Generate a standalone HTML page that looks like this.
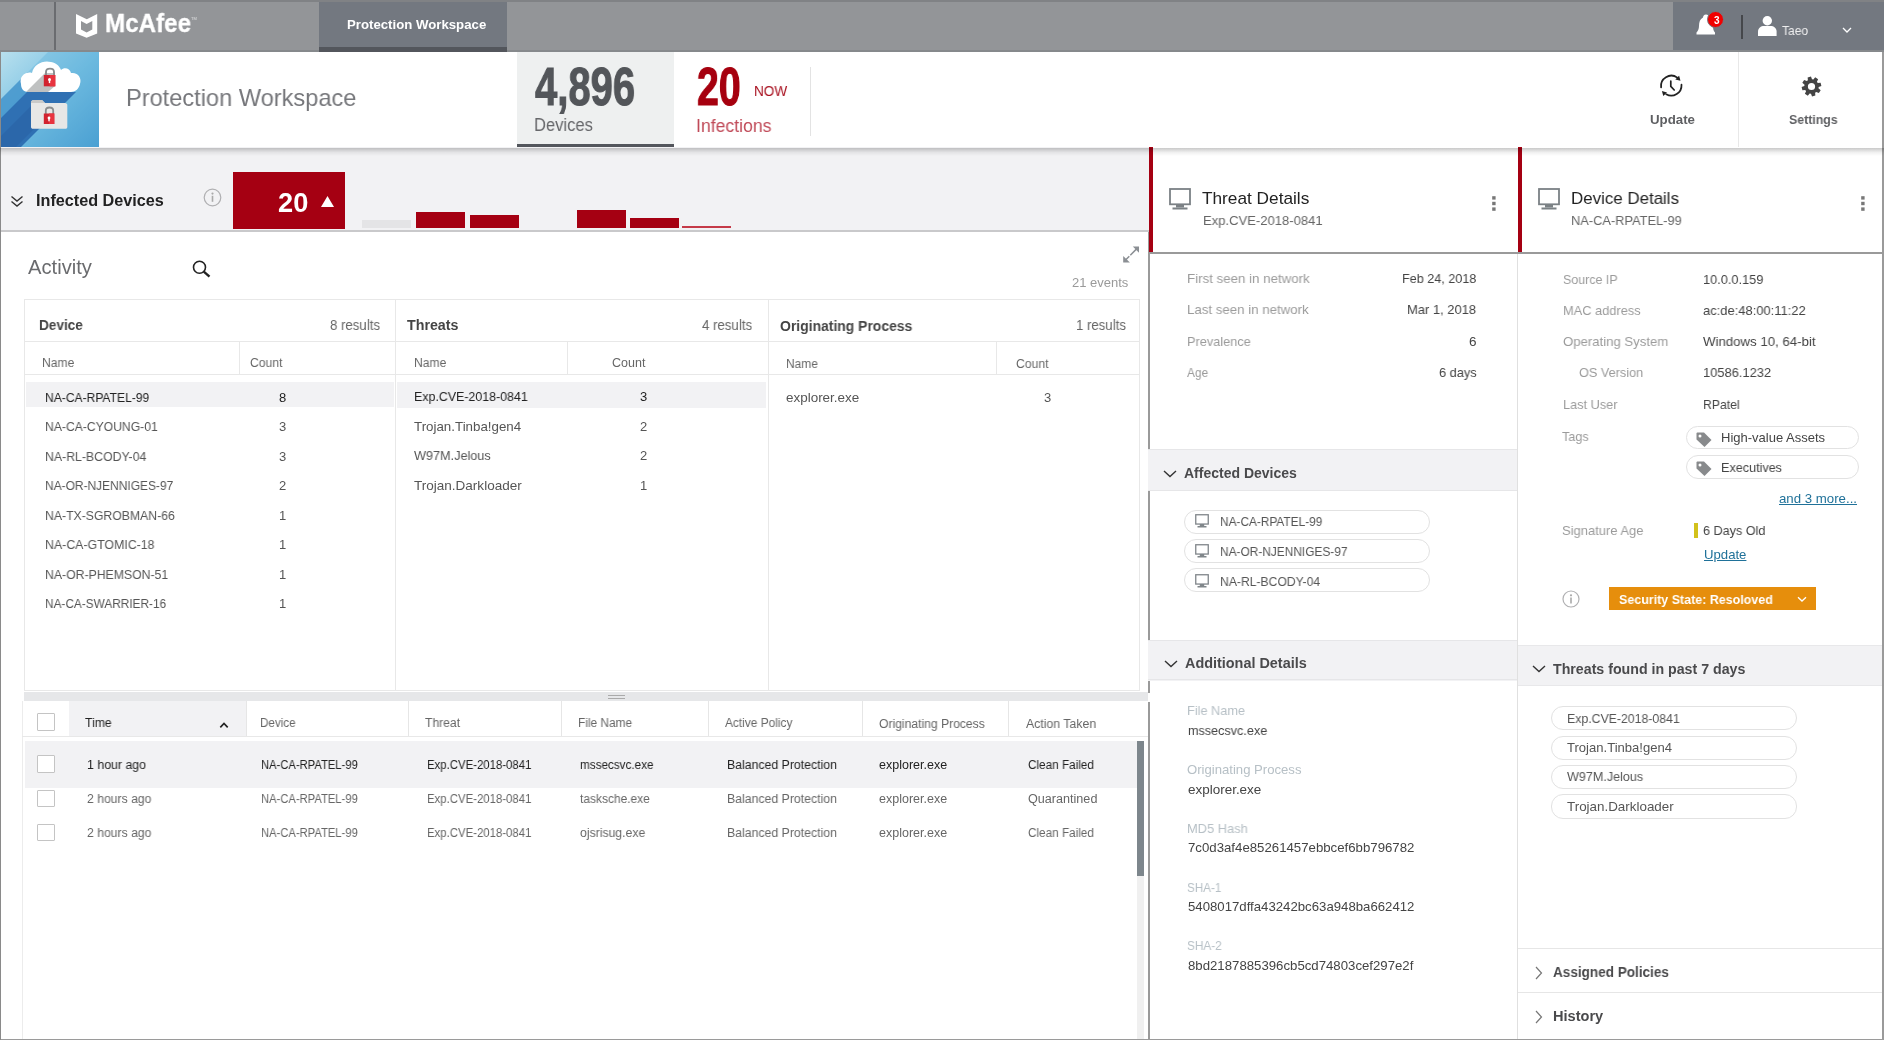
<!DOCTYPE html>
<html><head><meta charset="utf-8"><style>
html,body{margin:0;padding:0;}
body{width:1884px;height:1040px;position:relative;overflow:hidden;background:#fff;font-family:"Liberation Sans",sans-serif;}
.t{position:absolute;white-space:nowrap;line-height:1;transform-origin:0 0;will-change:transform;}
.r{position:absolute;}
svg.r{display:block;overflow:visible;}
</style></head><body>
<div class="r" style="left:0px;top:0px;width:1884px;height:52px;background:#939598;"></div>
<div class="r" style="left:0px;top:0px;width:1884px;height:1.6px;background:#808285;"></div>
<div class="r" style="left:54.3px;top:1.6px;width:1.3px;height:50.4px;background:#6a6c70;"></div>
<svg class="r" style="left:76px;top:13.5px" width="22" height="24" viewBox="0 0 22 24"><path fill="#fff" fill-rule="evenodd" d="M0 0 L10.8 5.2 L21.2 0 L21.2 19.4 L10.6 23.7 L0 19.4 Z M5 7 L5 15.6 L10.6 18.6 L16.3 15.6 L16.3 7 L10.6 10 Z"/></svg>
<div class="t" style="left:104.60px;top:9.94px;font-size:26.3px;color:#fff;font-weight:bold;transform:scaleX(0.9193);-webkit-text-stroke:0.3px #fff;">McAfee</div>
<div class="t" style="left:191.20px;top:17.41px;font-size:4px;color:#fff;opacity:0.7;">TM</div>
<div class="r" style="left:319.3px;top:1.6px;width:187.7px;height:50.4px;background:#737880;"></div>
<div class="r" style="left:319.3px;top:47px;width:187.7px;height:5px;background:#53565c;"></div>
<div class="t" style="left:347.30px;top:18.40px;font-size:13px;color:#fff;font-weight:bold;transform:scaleX(1.0161);">Protection Workspace</div>
<div class="r" style="left:1672.8px;top:1.6px;width:1211.2px;height:50.4px;background:#737880;"></div>
<div class="r" style="left:507px;top:50px;width:1377px;height:2px;background:#86898c;"></div>
<div class="r" style="left:0px;top:50px;width:319.3px;height:2px;background:#86898c;"></div>
<svg class="r" style="left:1696px;top:13px" width="20" height="23" viewBox="0 0 20 23"><path fill="#fff" d="M10 1.5 C8 1.5 7 3 7 4.5 C4 6 3 9 3 13 C3 16 2 18 0.5 19.5 L0.5 21.5 L19 21.5 L19 19.5 C17.5 18 17 16 17 13 C17 9 16 6 13 4.5 C13 3 12 1.5 10 1.5 Z"/></svg>
<div class="r" style="left:1707.3px;top:10.9px;width:15px;height:15px;border-radius:50%;background:#f00000;border:1.7px solid #737880"></div>
<div class="t" style="left:1713.90px;top:15.64px;font-size:10px;color:#fff;font-weight:bold;transform:scaleX(0.9550);">3</div>
<div class="r" style="left:1741px;top:15px;width:1.5px;height:24px;background:#45474b;"></div>
<svg class="r" style="left:1758px;top:16px" width="19" height="20" viewBox="0 0 19 20"><circle cx="9.3" cy="4.7" r="4.7" fill="#fff"/><path fill="#fff" d="M0 20 L0 15.5 C0 12 3 10 6 10 L12.6 10 C15.6 10 18.6 12 18.6 15.5 L18.6 20 Z"/></svg>
<div class="t" style="left:1781.90px;top:24.00px;font-size:13px;color:#eeeeee;transform:scaleX(0.9255);">Taeo</div>
<svg class="r" style="left:1842px;top:27px" width="10" height="7" viewBox="0 0 10 7"><path d="M1 1 L5 5 L9 1" stroke="#fff" stroke-width="1.3" fill="none"/></svg>
<div class="r" style="left:0px;top:52px;width:1884px;height:95px;background:#fff;"></div>
<svg class="r" style="left:1px;top:52px" width="98" height="95" viewBox="0 0 98 95">
<defs><linearGradient id="bg1" x1="0" y1="0" x2="1" y2="1"><stop offset="0" stop-color="#b8e0ee"/><stop offset="0.5" stop-color="#78c0e2"/><stop offset="1" stop-color="#4398cf"/></linearGradient></defs>
<rect width="98" height="95" fill="url(#bg1)"/>
<path d="M0 47 L47 0 L98 0 L98 95 L0 95 Z" fill="#58aedb" opacity="0.35"/>
<path d="M0 47 L27 20 L40 40 L0 80 Z" fill="#3f90ca" opacity="0.75"/>
<path d="M0 66 L26 40 L75 40 L20 95 L0 95 Z" fill="#2f70b3"/>
<path d="M0 95 L0 84 L30 54 L56 54 L15 95 Z" fill="#2b65a8" opacity="0.8"/>
<path d="M20 32 C18 25 24 19 31 21 C33 12 42 8 50 10 C56 11 59 15 60 18 C63 15 69 16 70 21 C77 20 81 26 79 32 C78 37 74 40 70 40 L27 40 C22 40 20 36 20 32 Z" fill="#fff"/>
<path d="M25 40 L44 21 L54 21 L54 34 L47 40 Z" fill="#bfc1c1"/>
<path d="M45 24 L45 20 C45 15.5 53 15.5 53 20 L53 24" stroke="#8a8d8e" stroke-width="1.9" fill="none"/>
<rect x="42.8" y="23" width="11.5" height="11.3" fill="#d2232f"/>
<rect x="48.6" y="23" width="5.7" height="11.3" fill="#e8343f"/>
<circle cx="48.5" cy="27.6" r="1.5" fill="#fff"/><rect x="47.8" y="27.6" width="1.4" height="3.5" fill="#fff"/>
<path d="M30 51 C30 49 31 48 33 48 L41 48 L44 51 L64 51 C65.5 51 66.3 52 66.3 53 L66.3 75 C66.3 76 65.5 76.8 64.5 76.8 L32 76.8 C30.8 76.8 30 76 30 75 Z" fill="#e7e7e6"/>
<path d="M30 51 C30 49 31 48 33 48 L41 48 L44 51 Z" fill="#c9c9c8"/>
<path d="M44.8 62 L44.8 58.5 C44.8 54.5 52.2 54.5 52.2 58.5 L52.2 62" stroke="#8a8d8e" stroke-width="1.8" fill="none"/>
<rect x="42.8" y="61.5" width="10.5" height="10.5" fill="#d2232f"/>
<rect x="48" y="61.5" width="5.3" height="10.5" fill="#e8343f"/>
<circle cx="48" cy="66" r="1.4" fill="#fff"/><rect x="47.3" y="66" width="1.4" height="3.3" fill="#fff"/>
</svg>
<div class="t" style="left:126.00px;top:85.99px;font-size:24px;color:#76777b;transform:scaleX(0.9831);">Protection Workspace</div>
<div class="r" style="left:516.6px;top:52px;width:157px;height:95px;background:#eef0f0;"></div>
<div class="r" style="left:516.6px;top:143.8px;width:157.4px;height:4.2px;background:#53565c;"></div>
<div class="t" style="left:534.60px;top:59.87px;font-size:54.5px;color:#53565a;font-weight:bold;transform:scaleX(0.7346);-webkit-text-stroke:1.1px #53565a;">4,896</div>
<div class="t" style="left:533.80px;top:115.66px;font-size:18px;color:#66676a;transform:scaleX(0.9203);">Devices</div>
<div class="t" style="left:696.80px;top:59.87px;font-size:54.5px;color:#a6000f;font-weight:bold;transform:scaleX(0.7211);-webkit-text-stroke:1.1px #a6000f;">20</div>
<div class="t" style="left:753.70px;top:84.35px;font-size:14px;color:#a8101f;transform:scaleX(0.9708);">NOW</div>
<div class="t" style="left:695.50px;top:116.86px;font-size:18px;color:#c04a58;transform:scaleX(0.9799);">Infections</div>
<div class="r" style="left:809.5px;top:67px;width:1px;height:69px;background:#e3e3e3;"></div>
<svg class="r" style="left:1659px;top:73.5px" width="25" height="24" viewBox="0 0 25 24"><path d="M2.1 13.4 A10.3 10.3 0 0 1 18.3 3.6" stroke="#222" stroke-width="1.75" fill="none" stroke-linecap="round"/><path d="M22.5 10.7 A10.3 10.3 0 0 1 7.2 20.3" stroke="#222" stroke-width="1.75" fill="none" stroke-linecap="round"/><path d="M21.5 6.7 L16.3 5.6 L20.1 1.8 Z" fill="#222"/><path d="M2.9 16.9 L8 18.4 L4.3 22.1 Z" fill="#222"/><path d="M11.8 7.2 L11.8 12.4 L15.2 16" stroke="#222" stroke-width="1.7" fill="none" stroke-linecap="round"/></svg>
<div class="t" style="left:1650.00px;top:112.60px;font-size:13px;color:#5e5f62;font-weight:bold;transform:scaleX(1.0216);">Update</div>
<div class="r" style="left:1738px;top:52px;width:1px;height:95px;background:#e8e8e8;"></div>
<svg class="r" style="left:1798.9px;top:73.8px" width="25" height="25" viewBox="0 0 25 25"><path fill="#444" fill-rule="evenodd" d="M8.90 6.26 L8.63 3.39 L11.98 2.61 L13.00 5.32 L14.36 5.55 L16.21 3.32 L19.12 5.14 L17.93 7.78 L18.74 8.90 L21.61 8.63 L22.39 11.98 L19.68 13.00 L19.45 14.36 L21.68 16.21 L19.86 19.12 L17.22 17.93 L16.10 18.74 L16.37 21.61 L13.02 22.39 L12.00 19.68 L10.64 19.45 L8.79 21.68 L5.88 19.86 L7.07 17.22 L6.26 16.10 L3.39 16.37 L2.61 13.02 L5.32 12.00 L5.55 10.64 L3.32 8.79 L5.14 5.88 L7.78 7.07 Z M16.1 12.5 A3.6 3.6 0 1 0 8.9 12.5 A3.6 3.6 0 1 0 16.1 12.5 Z"/></svg>
<div class="t" style="left:1788.90px;top:112.60px;font-size:13px;color:#5e5f62;font-weight:bold;transform:scaleX(0.9493);">Settings</div>
<div class="r" style="left:0px;top:147px;width:1150px;height:84px;background:#f2f2f4;"></div>
<div class="r" style="left:0px;top:230px;width:1150px;height:1.6px;background:#c9c9cb;"></div>
<svg class="r" style="left:10px;top:194.5px" width="14" height="13" viewBox="0 0 14 13"><path d="M1.5 1.5 L7 6 L12.5 1.5 M1.5 6.5 L7 11 L12.5 6.5" stroke="#333" stroke-width="1.4" fill="none"/></svg>
<div class="t" style="left:35.90px;top:192.66px;font-size:16px;color:#222;font-weight:bold;transform:scaleX(1.0127);">Infected Devices</div>
<svg class="r" style="left:202.5px;top:188px" width="19" height="19" viewBox="0 0 19 19"><circle cx="9.5" cy="9.5" r="8.3" stroke="#b0b0b2" stroke-width="1.2" fill="none"/><circle cx="9.5" cy="5.6" r="1.1" fill="#aaa"/><rect x="8.7" y="7.8" width="1.6" height="6" fill="#aaa"/></svg>
<div class="r" style="left:233px;top:172px;width:112px;height:56.6px;background:#a50012;"></div>
<div class="t" style="left:277.70px;top:189.95px;font-size:27px;color:#fff;font-weight:bold;transform:scaleX(1.0083);">20</div>
<svg class="r" style="left:321px;top:196px" width="13" height="11" viewBox="0 0 13 11"><path d="M6.5 0 L13 11 L0 11 Z" fill="#fff"/></svg>
<div class="r" style="left:362px;top:219.6px;width:49px;height:8px;background:#e4e4e6;"></div>
<div class="r" style="left:416px;top:211.8px;width:49px;height:15.8px;background:#a50012;"></div>
<div class="r" style="left:470px;top:215.2px;width:49px;height:12.4px;background:#a50012;"></div>
<div class="r" style="left:577px;top:210px;width:49px;height:17.6px;background:#a50012;"></div>
<div class="r" style="left:630px;top:217.6px;width:49px;height:10px;background:#a50012;"></div>
<div class="r" style="left:682px;top:225.8px;width:49px;height:1.8px;background:#c53a48;"></div>
<div class="r" style="left:0px;top:231.6px;width:1148px;height:810px;background:#fff;"></div>
<div class="t" style="left:27.90px;top:257.27px;font-size:20px;color:#6a6b6e;transform:scaleX(1.0087);">Activity</div>
<svg class="r" style="left:192px;top:260px" width="20" height="18" viewBox="0 0 20 18"><circle cx="7.5" cy="7.3" r="6" stroke="#222" stroke-width="1.6" fill="none"/><path d="M11.8 11.6 L17.5 16.6" stroke="#222" stroke-width="2.4"/></svg>
<svg class="r" style="left:1122px;top:244.5px" width="18" height="19" viewBox="0 0 18 19"><path d="M3.3 15.2 L7.3 11.2 M8.3 10.2 L14.6 3.9" stroke="#8b8f94" stroke-width="1.5"/><path d="M10.8 1.6 L17 1.6 L17 7.8 Z" fill="#8b8f94"/><path d="M1.2 10.9 L1.2 17.4 L7.9 17.4 Z" fill="#8b8f94"/></svg>
<div class="t" style="left:1072.00px;top:276.40px;font-size:13px;color:#9a9a9a;">21 events</div>
<div class="r" style="left:24px;top:298.5px;width:1115.5px;height:392px;border:1px solid #e8e8e8;box-sizing:border-box;background:#fff"></div>
<div class="r" style="left:395px;top:299px;width:1px;height:391px;background:#e8e8e8;"></div>
<div class="r" style="left:767.5px;top:299px;width:1px;height:391px;background:#e8e8e8;"></div>
<div class="r" style="left:24px;top:341.2px;width:1115.5px;height:1px;background:#e8e8e8;"></div>
<div class="r" style="left:24px;top:373.5px;width:1115.5px;height:1px;background:#e8e8e8;"></div>
<div class="r" style="left:239.3px;top:342px;width:1px;height:31.5px;background:#e8e8e8;"></div>
<div class="r" style="left:567px;top:342px;width:1px;height:31.5px;background:#e8e8e8;"></div>
<div class="r" style="left:995.5px;top:342px;width:1px;height:31.5px;background:#e8e8e8;"></div>
<div class="t" style="left:39.00px;top:317.55px;font-size:14px;color:#444;font-weight:bold;transform:scaleX(0.9723);">Device</div>
<div class="t" style="left:330.00px;top:317.55px;font-size:14px;color:#666;transform:scaleX(0.9452);">8 results</div>
<div class="t" style="left:407.30px;top:317.75px;font-size:14px;color:#444;font-weight:bold;transform:scaleX(1.0168);">Threats</div>
<div class="t" style="left:701.70px;top:317.75px;font-size:14px;color:#666;transform:scaleX(0.9471);">4 results</div>
<div class="t" style="left:779.50px;top:318.65px;font-size:14px;color:#444;font-weight:bold;transform:scaleX(0.9944);">Originating Process</div>
<div class="t" style="left:1075.70px;top:318.45px;font-size:14px;color:#666;transform:scaleX(0.9433);">1 results</div>
<div class="t" style="left:42.40px;top:356.72px;font-size:12.5px;color:#666;transform:scaleX(0.9685);">Name</div>
<div class="t" style="left:250.30px;top:356.72px;font-size:12.5px;color:#666;transform:scaleX(0.9715);">Count</div>
<div class="t" style="left:414.00px;top:356.92px;font-size:12.5px;color:#666;transform:scaleX(0.9685);">Name</div>
<div class="t" style="left:612.30px;top:356.92px;font-size:12.5px;color:#666;transform:scaleX(0.9925);">Count</div>
<div class="t" style="left:785.50px;top:358.02px;font-size:12.5px;color:#666;transform:scaleX(0.9535);">Name</div>
<div class="t" style="left:1015.80px;top:358.02px;font-size:12.5px;color:#666;transform:scaleX(0.9745);">Count</div>
<div class="r" style="left:25.6px;top:381.8px;width:368.3px;height:25.6px;background:#f2f2f4;"></div>
<div class="r" style="left:397.4px;top:382px;width:368.5px;height:26px;background:#f2f2f4;"></div>
<div class="t" style="left:44.50px;top:390.90px;font-size:13px;color:#222;transform:scaleX(0.9287);">NA-CA-RPATEL-99</div>
<div class="t" style="left:279.30px;top:390.90px;font-size:13px;color:#222;transform:scaleX(0.9500);">8</div>
<div class="t" style="left:44.50px;top:420.35px;font-size:13px;color:#555;transform:scaleX(0.9345);">NA-CA-CYOUNG-01</div>
<div class="t" style="left:279.30px;top:420.35px;font-size:13px;color:#555;transform:scaleX(0.9500);">3</div>
<div class="t" style="left:44.50px;top:449.80px;font-size:13px;color:#555;transform:scaleX(0.9454);">NA-RL-BCODY-04</div>
<div class="t" style="left:279.30px;top:449.80px;font-size:13px;color:#555;transform:scaleX(0.9500);">3</div>
<div class="t" style="left:44.50px;top:479.25px;font-size:13px;color:#555;transform:scaleX(0.9197);">NA-OR-NJENNIGES-97</div>
<div class="t" style="left:279.30px;top:479.25px;font-size:13px;color:#555;transform:scaleX(0.9500);">2</div>
<div class="t" style="left:44.50px;top:508.70px;font-size:13px;color:#555;transform:scaleX(0.9409);">NA-TX-SGROBMAN-66</div>
<div class="t" style="left:279.30px;top:508.70px;font-size:13px;color:#555;transform:scaleX(0.9500);">1</div>
<div class="t" style="left:44.50px;top:538.15px;font-size:13px;color:#555;transform:scaleX(0.9497);">NA-CA-GTOMIC-18</div>
<div class="t" style="left:279.30px;top:538.15px;font-size:13px;color:#555;transform:scaleX(0.9500);">1</div>
<div class="t" style="left:44.50px;top:567.60px;font-size:13px;color:#555;transform:scaleX(0.9423);">NA-OR-PHEMSON-51</div>
<div class="t" style="left:279.30px;top:567.60px;font-size:13px;color:#555;transform:scaleX(0.9500);">1</div>
<div class="t" style="left:44.50px;top:597.05px;font-size:13px;color:#555;transform:scaleX(0.9095);">NA-CA-SWARRIER-16</div>
<div class="t" style="left:279.30px;top:597.05px;font-size:13px;color:#555;transform:scaleX(0.9500);">1</div>
<div class="t" style="left:414.00px;top:390.20px;font-size:13px;color:#222;transform:scaleX(0.9543);">Exp.CVE-2018-0841</div>
<div class="t" style="left:640.00px;top:390.20px;font-size:13px;color:#222;transform:scaleX(0.9500);">3</div>
<div class="t" style="left:414.00px;top:419.65px;font-size:13px;color:#555;transform:scaleX(1.0253);">Trojan.Tinba!gen4</div>
<div class="t" style="left:640.00px;top:419.65px;font-size:13px;color:#555;transform:scaleX(0.9500);">2</div>
<div class="t" style="left:414.00px;top:449.10px;font-size:13px;color:#555;transform:scaleX(0.9740);">W97M.Jelous</div>
<div class="t" style="left:640.00px;top:449.10px;font-size:13px;color:#555;transform:scaleX(0.9500);">2</div>
<div class="t" style="left:414.00px;top:478.55px;font-size:13px;color:#555;transform:scaleX(1.0401);">Trojan.Darkloader</div>
<div class="t" style="left:640.00px;top:478.55px;font-size:13px;color:#555;transform:scaleX(0.9500);">1</div>
<div class="t" style="left:785.50px;top:391.10px;font-size:13px;color:#555;transform:scaleX(1.0339);">explorer.exe</div>
<div class="t" style="left:1043.90px;top:391.10px;font-size:13px;color:#555;transform:scaleX(0.9500);">3</div>
<div class="r" style="left:24px;top:692.3px;width:1124px;height:9px;background:#e6e7e9;"></div>
<div class="r" style="left:608px;top:695.2px;width:17px;height:1px;background:#aaa;"></div>
<div class="r" style="left:608px;top:698.4px;width:17px;height:1px;background:#aaa;"></div>
<div class="r" style="left:22.3px;top:701.2px;width:1px;height:340px;background:#ececec;"></div>
<div class="r" style="left:69px;top:701.2px;width:177.3px;height:35.2px;background:#f2f2f4;"></div>
<div class="r" style="left:22.3px;top:736px;width:1125.4px;height:1.3px;background:#e8e8e8;"></div>
<div class="r" style="left:246.3px;top:701.2px;width:1px;height:35px;background:#e6e6e6;"></div>
<div class="r" style="left:408px;top:701.2px;width:1px;height:35px;background:#e6e6e6;"></div>
<div class="r" style="left:560.7px;top:701.2px;width:1px;height:35px;background:#e6e6e6;"></div>
<div class="r" style="left:707.6px;top:701.2px;width:1px;height:35px;background:#e6e6e6;"></div>
<div class="r" style="left:861.6px;top:701.2px;width:1px;height:35px;background:#e6e6e6;"></div>
<div class="r" style="left:1008.4px;top:701.2px;width:1px;height:35px;background:#e6e6e6;"></div>
<div class="r" style="left:37.2px;top:713.3px;width:17.4px;height:17.4px;border:1px solid #c4c4c4;box-sizing:border-box;background:#fff;border-radius:1px"></div>
<div class="t" style="left:85.40px;top:716.92px;font-size:12.5px;color:#222;transform:scaleX(0.9780);">Time</div>
<svg class="r" style="left:218.5px;top:720.5px" width="10" height="8" viewBox="0 0 10 8"><path d="M1.3 6.3 L5 2.5 L8.7 6.3" stroke="#222" stroke-width="1.7" fill="none"/></svg>
<div class="t" style="left:259.60px;top:717.22px;font-size:12.5px;color:#666;transform:scaleX(0.9319);">Device</div>
<div class="t" style="left:425.20px;top:717.22px;font-size:12.5px;color:#666;transform:scaleX(0.9682);">Threat</div>
<div class="t" style="left:578.20px;top:717.22px;font-size:12.5px;color:#666;transform:scaleX(0.9500);">File Name</div>
<div class="t" style="left:725.00px;top:717.22px;font-size:12.5px;color:#666;transform:scaleX(0.9527);">Active Policy</div>
<div class="t" style="left:879.40px;top:718.02px;font-size:12.5px;color:#666;transform:scaleX(0.9702);">Originating Process</div>
<div class="t" style="left:1025.60px;top:718.02px;font-size:12.5px;color:#666;transform:scaleX(0.9825);">Action Taken</div>
<div class="r" style="left:24.7px;top:741px;width:1112.3px;height:47px;background:#f2f2f4;"></div>
<div class="r" style="left:37.2px;top:755.4px;width:17.4px;height:17.4px;border:1px solid #c4c4c4;box-sizing:border-box;background:#fff;border-radius:1px"></div>
<div class="t" style="left:86.90px;top:758.82px;font-size:12.5px;color:#222;transform:scaleX(0.9874);">1 hour ago</div>
<div class="t" style="left:260.50px;top:758.82px;font-size:12.5px;color:#222;transform:scaleX(0.8971);">NA-CA-RPATEL-99</div>
<div class="t" style="left:426.80px;top:758.82px;font-size:12.5px;color:#222;transform:scaleX(0.9106);">Exp.CVE-2018-0841</div>
<div class="t" style="left:579.70px;top:758.82px;font-size:12.5px;color:#222;transform:scaleX(0.9376);">mssecsvc.exe</div>
<div class="t" style="left:727.20px;top:758.82px;font-size:12.5px;color:#222;transform:scaleX(0.9826);">Balanced Protection</div>
<div class="t" style="left:879.40px;top:758.82px;font-size:12.5px;color:#222;">explorer.exe</div>
<div class="t" style="left:1028.20px;top:758.82px;font-size:12.5px;color:#222;transform:scaleX(0.9387);">Clean Failed</div>
<div class="r" style="left:37.2px;top:790px;width:17.4px;height:17.4px;border:1px solid #c4c4c4;box-sizing:border-box;background:#fff;border-radius:1px"></div>
<div class="t" style="left:86.90px;top:792.92px;font-size:12.5px;color:#666;transform:scaleX(0.9758);">2 hours ago</div>
<div class="t" style="left:260.50px;top:792.92px;font-size:12.5px;color:#666;transform:scaleX(0.8971);">NA-CA-RPATEL-99</div>
<div class="t" style="left:426.80px;top:792.92px;font-size:12.5px;color:#666;transform:scaleX(0.9106);">Exp.CVE-2018-0841</div>
<div class="t" style="left:579.70px;top:792.92px;font-size:12.5px;color:#666;transform:scaleX(0.9568);">tasksche.exe</div>
<div class="t" style="left:727.20px;top:792.92px;font-size:12.5px;color:#666;transform:scaleX(0.9826);">Balanced Protection</div>
<div class="t" style="left:879.40px;top:792.92px;font-size:12.5px;color:#666;">explorer.exe</div>
<div class="t" style="left:1028.20px;top:792.92px;font-size:12.5px;color:#666;transform:scaleX(1.0087);">Quarantined</div>
<div class="r" style="left:37.2px;top:823.8px;width:17.4px;height:17.4px;border:1px solid #c4c4c4;box-sizing:border-box;background:#fff;border-radius:1px"></div>
<div class="t" style="left:86.90px;top:826.92px;font-size:12.5px;color:#666;transform:scaleX(0.9758);">2 hours ago</div>
<div class="t" style="left:260.50px;top:826.92px;font-size:12.5px;color:#666;transform:scaleX(0.8971);">NA-CA-RPATEL-99</div>
<div class="t" style="left:426.80px;top:826.92px;font-size:12.5px;color:#666;transform:scaleX(0.9106);">Exp.CVE-2018-0841</div>
<div class="t" style="left:579.70px;top:826.92px;font-size:12.5px;color:#666;transform:scaleX(0.9790);">ojsrisug.exe</div>
<div class="t" style="left:727.20px;top:826.92px;font-size:12.5px;color:#666;transform:scaleX(0.9826);">Balanced Protection</div>
<div class="t" style="left:879.40px;top:826.92px;font-size:12.5px;color:#666;">explorer.exe</div>
<div class="t" style="left:1028.20px;top:826.92px;font-size:12.5px;color:#666;transform:scaleX(0.9387);">Clean Failed</div>
<div class="r" style="left:1137px;top:740.5px;width:7.2px;height:300px;background:#f0f0f0;"></div>
<div class="r" style="left:1137.3px;top:740.5px;width:6.8px;height:135.5px;background:#7d868c;"></div>
<div class="r" style="left:1147.7px;top:231.6px;width:2px;height:461px;background:#9a9a9a;"></div>
<div class="r" style="left:1147.7px;top:702px;width:2px;height:338px;background:#9a9a9a;"></div>
<div class="r" style="left:1149.6px;top:147px;width:368px;height:893px;background:#fff;"></div>
<div class="r" style="left:1149px;top:147px;width:4px;height:105.2px;background:#a50012;"></div>
<div class="r" style="left:1149.6px;top:252.2px;width:734.4px;height:1.4px;background:#9a9a9a;"></div>
<svg class="r" style="left:1169px;top:188.3px" width="22" height="22" viewBox="0 0 22 22"><rect x="1" y="1" width="20" height="15.3" stroke="#7b8185" stroke-width="1.8" fill="none"/><rect x="7" y="16" width="8" height="3.5" fill="#7b8185"/><rect x="3.5" y="19.5" width="15" height="2" fill="#7b8185"/></svg>
<div class="t" style="left:1202.30px;top:189.71px;font-size:17px;color:#222;transform:scaleX(1.0142);">Threat Details</div>
<div class="t" style="left:1202.60px;top:214.37px;font-size:13.5px;color:#666;transform:scaleX(0.9665);">Exp.CVE-2018-0841</div>
<svg class="r" style="left:1492.2px;top:196px" width="4" height="15" viewBox="0 0 4 15"><rect x="0.2" y="0.2" width="3.4" height="3.4" fill="#777"/><rect x="0.2" y="5.8" width="3.4" height="3.4" fill="#777"/><rect x="0.2" y="11.4" width="3.4" height="3.4" fill="#777"/></svg>
<div class="t" style="left:1186.70px;top:272.47px;font-size:13.5px;color:#9b9b9b;transform:scaleX(0.9856);">First seen in network</div>
<div class="t" style="left:1402.00px;top:272.47px;font-size:13.5px;color:#444;transform:scaleX(0.9353);">Feb 24, 2018</div>
<div class="t" style="left:1186.70px;top:303.47px;font-size:13.5px;color:#9b9b9b;transform:scaleX(0.9834);">Last seen in network</div>
<div class="t" style="left:1407.30px;top:303.47px;font-size:13.5px;color:#444;transform:scaleX(0.9591);">Mar 1, 2018</div>
<div class="t" style="left:1186.70px;top:334.87px;font-size:13.5px;color:#9b9b9b;transform:scaleX(0.9445);">Prevalence</div>
<div class="t" style="left:1469.10px;top:334.87px;font-size:13.5px;color:#444;transform:scaleX(0.9733);">6</div>
<div class="t" style="left:1186.70px;top:366.27px;font-size:13.5px;color:#9b9b9b;transform:scaleX(0.8833);">Age</div>
<div class="t" style="left:1438.70px;top:366.27px;font-size:13.5px;color:#444;transform:scaleX(0.9484);">6 days</div>
<div class="r" style="left:1147.7px;top:449.3px;width:369.8px;height:41px;background:#f2f2f4;"></div>
<div class="r" style="left:1147.7px;top:449.3px;width:369.8px;height:1px;background:#e6e6e8;"></div>
<div class="r" style="left:1147.7px;top:489.6px;width:369.8px;height:1px;background:#e6e6e8;"></div>
<svg class="r" style="left:1162.7px;top:469.8px" width="14" height="8" viewBox="0 0 14 8"><path d="M1 1 L7 6.5 L13 1" stroke="#333" stroke-width="1.4" fill="none"/></svg>
<div class="t" style="left:1183.60px;top:466.15px;font-size:14px;color:#4a4a4c;font-weight:bold;">Affected Devices</div>
<div class="r" style="left:1184.4px;top:510px;width:245.2px;height:24px;border:1px solid #e2e2e2;box-sizing:border-box;border-radius:12px"></div>
<svg class="r" style="left:1195.3px;top:513.7px" width="14" height="14" viewBox="0 0 14 14"><rect x="0.75" y="0.75" width="12.5" height="9.3" stroke="#80868a" stroke-width="1.3" fill="none"/><rect x="4.8" y="10" width="4.4" height="2" fill="#80868a"/><rect x="2.5" y="12" width="9" height="1.5" fill="#80868a"/></svg>
<div class="t" style="left:1220.40px;top:515.00px;font-size:13px;color:#555;transform:scaleX(0.9118);">NA-CA-RPATEL-99</div>
<div class="r" style="left:1184.4px;top:539.2px;width:245.2px;height:24px;border:1px solid #e2e2e2;box-sizing:border-box;border-radius:12px"></div>
<svg class="r" style="left:1195.3px;top:544.1px" width="14" height="14" viewBox="0 0 14 14"><rect x="0.75" y="0.75" width="12.5" height="9.3" stroke="#80868a" stroke-width="1.3" fill="none"/><rect x="4.8" y="10" width="4.4" height="2" fill="#80868a"/><rect x="2.5" y="12" width="9" height="1.5" fill="#80868a"/></svg>
<div class="t" style="left:1220.40px;top:545.00px;font-size:13px;color:#555;transform:scaleX(0.9146);">NA-OR-NJENNIGES-97</div>
<div class="r" style="left:1184.4px;top:568.3px;width:245.2px;height:24px;border:1px solid #e2e2e2;box-sizing:border-box;border-radius:12px"></div>
<svg class="r" style="left:1195.3px;top:573.5px" width="14" height="14" viewBox="0 0 14 14"><rect x="0.75" y="0.75" width="12.5" height="9.3" stroke="#80868a" stroke-width="1.3" fill="none"/><rect x="4.8" y="10" width="4.4" height="2" fill="#80868a"/><rect x="2.5" y="12" width="9" height="1.5" fill="#80868a"/></svg>
<div class="t" style="left:1220.40px;top:574.60px;font-size:13px;color:#555;transform:scaleX(0.9342);">NA-RL-BCODY-04</div>
<div class="r" style="left:1147.7px;top:639.6px;width:369.8px;height:41px;background:#f2f2f4;"></div>
<div class="r" style="left:1147.7px;top:639.6px;width:369.8px;height:1px;background:#e6e6e8;"></div>
<div class="r" style="left:1147.7px;top:679.4px;width:369.8px;height:1px;background:#e6e6e8;"></div>
<svg class="r" style="left:1164px;top:659.8px" width="14" height="8" viewBox="0 0 14 8"><path d="M1 1 L7 6.5 L13 1" stroke="#333" stroke-width="1.4" fill="none"/></svg>
<div class="t" style="left:1184.70px;top:656.25px;font-size:14px;color:#4a4a4c;font-weight:bold;transform:scaleX(1.0292);">Additional Details</div>
<div class="t" style="left:1187.00px;top:704.20px;font-size:13px;color:#b7c0c6;transform:scaleX(0.9789);">File Name</div>
<div class="t" style="left:1187.80px;top:723.70px;font-size:13px;color:#444;transform:scaleX(0.9700);">mssecsvc.exe</div>
<div class="t" style="left:1187.00px;top:763.00px;font-size:13px;color:#b7c0c6;transform:scaleX(1.0093);">Originating Process</div>
<div class="t" style="left:1187.80px;top:782.50px;font-size:13px;color:#444;transform:scaleX(1.0353);">explorer.exe</div>
<div class="t" style="left:1187.00px;top:821.80px;font-size:13px;color:#b7c0c6;transform:scaleX(0.9886);">MD5 Hash</div>
<div class="t" style="left:1187.80px;top:841.30px;font-size:13px;color:#444;transform:scaleX(1.0168);">7c0d3af4e85261457ebbcef6bb796782</div>
<div class="t" style="left:1187.00px;top:880.60px;font-size:13px;color:#b7c0c6;transform:scaleX(0.8982);">SHA-1</div>
<div class="t" style="left:1187.80px;top:900.10px;font-size:13px;color:#444;transform:scaleX(1.0146);">5408017dffa43242bc63a948ba662412</div>
<div class="t" style="left:1187.00px;top:939.40px;font-size:13px;color:#b7c0c6;transform:scaleX(0.9086);">SHA-2</div>
<div class="t" style="left:1187.80px;top:958.90px;font-size:13px;color:#444;transform:scaleX(1.0155);">8bd2187885396cb5cd74803cef297e2f</div>
<div class="r" style="left:1517px;top:253.6px;width:1px;height:787px;background:#e0e0e0;"></div>
<div class="r" style="left:1148px;top:1038.5px;width:736px;height:1.5px;background:#9a9a9a;"></div>
<div class="r" style="left:0px;top:1038.5px;width:1148px;height:1.5px;background:#9a9a9a;"></div>
<div class="r" style="left:1518px;top:147px;width:4px;height:105.2px;background:#a50012;"></div>
<svg class="r" style="left:1538px;top:188.2px" width="22" height="22" viewBox="0 0 22 22"><rect x="1" y="1" width="20" height="15.3" stroke="#7b8185" stroke-width="1.8" fill="none"/><rect x="7" y="16" width="8" height="3.5" fill="#7b8185"/><rect x="3.5" y="19.5" width="15" height="2" fill="#7b8185"/></svg>
<div class="t" style="left:1571.30px;top:189.71px;font-size:17px;color:#222;transform:scaleX(0.9940);">Device Details</div>
<div class="t" style="left:1571.30px;top:214.37px;font-size:13.5px;color:#666;transform:scaleX(0.9502);">NA-CA-RPATEL-99</div>
<svg class="r" style="left:1860.7px;top:196px" width="4" height="15" viewBox="0 0 4 15"><rect x="0.2" y="0.2" width="3.4" height="3.4" fill="#777"/><rect x="0.2" y="5.8" width="3.4" height="3.4" fill="#777"/><rect x="0.2" y="11.4" width="3.4" height="3.4" fill="#777"/></svg>
<div class="t" style="left:1562.50px;top:272.57px;font-size:13.5px;color:#9b9b9b;transform:scaleX(0.9224);">Source IP</div>
<div class="t" style="left:1702.60px;top:272.57px;font-size:13.5px;color:#444;transform:scaleX(0.9467);">10.0.0.159</div>
<div class="t" style="left:1562.50px;top:303.87px;font-size:13.5px;color:#9b9b9b;transform:scaleX(0.9499);">MAC address</div>
<div class="t" style="left:1702.60px;top:303.87px;font-size:13.5px;color:#444;transform:scaleX(0.9599);">ac:de:48:00:11:22</div>
<div class="t" style="left:1562.50px;top:334.77px;font-size:13.5px;color:#9b9b9b;transform:scaleX(0.9745);">Operating System</div>
<div class="t" style="left:1702.60px;top:334.77px;font-size:13.5px;color:#444;transform:scaleX(0.9808);">Windows 10, 64-bit</div>
<div class="t" style="left:1578.90px;top:366.27px;font-size:13.5px;color:#9b9b9b;transform:scaleX(0.9400);">OS Version</div>
<div class="t" style="left:1702.60px;top:366.27px;font-size:13.5px;color:#444;transform:scaleX(0.9565);">10586.1232</div>
<div class="t" style="left:1562.50px;top:397.57px;font-size:13.5px;color:#9b9b9b;transform:scaleX(0.9437);">Last User</div>
<div class="t" style="left:1702.60px;top:397.57px;font-size:13.5px;color:#444;transform:scaleX(0.9062);">RPatel</div>
<div class="t" style="left:1562.30px;top:430.07px;font-size:13.5px;color:#9b9b9b;transform:scaleX(0.9368);">Tags</div>
<div class="r" style="left:1686px;top:425.5px;width:172.5px;height:23.7px;border:1px solid #e2e2e2;box-sizing:border-box;border-radius:12px"></div>
<svg class="r" style="left:1696px;top:431.5px" width="16" height="15" viewBox="0 0 16 15"><path d="M0.5 1.5 C0.5 1 1 0.5 1.5 0.5 L8 0.5 L15.5 8 L8.5 15 L0.5 7.5 Z" fill="#888a8c"/><circle cx="4" cy="4" r="1.5" fill="#fff"/></svg>
<div class="t" style="left:1721.30px;top:431.40px;font-size:13px;color:#444;">High-value Assets</div>
<div class="r" style="left:1686px;top:455.4px;width:172.5px;height:23.7px;border:1px solid #e2e2e2;box-sizing:border-box;border-radius:12px"></div>
<svg class="r" style="left:1696px;top:461.4px" width="16" height="15" viewBox="0 0 16 15"><path d="M0.5 1.5 C0.5 1 1 0.5 1.5 0.5 L8 0.5 L15.5 8 L8.5 15 L0.5 7.5 Z" fill="#888a8c"/><circle cx="4" cy="4" r="1.5" fill="#fff"/></svg>
<div class="t" style="left:1721.30px;top:460.70px;font-size:13px;color:#444;transform:scaleX(0.9690);">Executives</div>
<div class="t" style="left:1779.00px;top:492.00px;font-size:13px;color:#1f7199;transform:scaleX(1.0183);text-decoration:underline;">and 3 more...</div>
<div class="t" style="left:1562.30px;top:523.87px;font-size:13.5px;color:#9b9b9b;transform:scaleX(0.9611);">Signature Age</div>
<div class="r" style="left:1693.6px;top:523px;width:4px;height:14.5px;background:#d2c11c;"></div>
<div class="t" style="left:1702.90px;top:523.87px;font-size:13.5px;color:#444;transform:scaleX(0.9348);">6 Days Old</div>
<div class="t" style="left:1703.80px;top:548.30px;font-size:13px;color:#1f7199;transform:scaleX(1.0119);text-decoration:underline;">Update</div>
<svg class="r" style="left:1561.5px;top:590px" width="18" height="18" viewBox="0 0 18 18"><circle cx="9" cy="9" r="8" stroke="#b0b0b2" stroke-width="1.2" fill="none"/><circle cx="9" cy="5.3" r="1.1" fill="#aaa"/><rect x="8.2" y="7.5" width="1.6" height="6" fill="#aaa"/></svg>
<div class="r" style="left:1609px;top:586.7px;width:207px;height:23.1px;background:#e68e0c;"></div>
<div class="t" style="left:1619.20px;top:592.60px;font-size:13px;color:#fff;font-weight:bold;transform:scaleX(0.9589);">Security State: Resoloved</div>
<svg class="r" style="left:1796.5px;top:596px" width="10" height="7" viewBox="0 0 10 7"><path d="M1 1.2 L5 5 L9 1.2" stroke="#fff" stroke-width="1.3" fill="none"/></svg>
<div class="r" style="left:1518px;top:645.2px;width:366px;height:40px;background:#f2f2f4;"></div>
<div class="r" style="left:1518px;top:645.2px;width:366px;height:1px;background:#e8e8ea;"></div>
<div class="r" style="left:1518px;top:684.6px;width:366px;height:1px;background:#e8e8ea;"></div>
<svg class="r" style="left:1531.5px;top:665.3px" width="14" height="8" viewBox="0 0 14 8"><path d="M1 1 L7 6.5 L13 1" stroke="#333" stroke-width="1.4" fill="none"/></svg>
<div class="t" style="left:1553.00px;top:661.85px;font-size:14px;color:#4a4a4c;font-weight:bold;transform:scaleX(1.0132);">Threats found in past 7 days</div>
<div class="r" style="left:1551px;top:706.2px;width:245.8px;height:24.2px;border:1px solid #e2e2e2;box-sizing:border-box;border-radius:12px"></div>
<div class="t" style="left:1567.20px;top:711.60px;font-size:13px;color:#555;transform:scaleX(0.9459);">Exp.CVE-2018-0841</div>
<div class="r" style="left:1551px;top:735.6px;width:245.8px;height:24.2px;border:1px solid #e2e2e2;box-sizing:border-box;border-radius:12px"></div>
<div class="t" style="left:1567.20px;top:741.00px;font-size:13px;color:#555;transform:scaleX(1.0043);">Trojan.Tinba!gen4</div>
<div class="r" style="left:1551px;top:765.0px;width:245.8px;height:24.2px;border:1px solid #e2e2e2;box-sizing:border-box;border-radius:12px"></div>
<div class="t" style="left:1567.20px;top:770.40px;font-size:13px;color:#555;transform:scaleX(0.9663);">W97M.Jelous</div>
<div class="r" style="left:1551px;top:794.4px;width:245.8px;height:24.2px;border:1px solid #e2e2e2;box-sizing:border-box;border-radius:12px"></div>
<div class="t" style="left:1567.20px;top:799.80px;font-size:13px;color:#555;transform:scaleX(1.0304);">Trojan.Darkloader</div>
<div class="r" style="left:1518px;top:948px;width:366px;height:1px;background:#e6e6e6;"></div>
<div class="r" style="left:1518px;top:992px;width:366px;height:1px;background:#e6e6e6;"></div>
<svg class="r" style="left:1534.5px;top:965.5px" width="8" height="14" viewBox="0 0 8 14"><path d="M1 1 L6.5 7 L1 13" stroke="#777" stroke-width="1.2" fill="none"/></svg>
<div class="t" style="left:1553.00px;top:964.95px;font-size:14px;color:#4a4a4c;font-weight:bold;transform:scaleX(0.9674);">Assigned Policies</div>
<svg class="r" style="left:1534.5px;top:1009.5px" width="8" height="14" viewBox="0 0 8 14"><path d="M1 1 L6.5 7 L1 13" stroke="#777" stroke-width="1.2" fill="none"/></svg>
<div class="t" style="left:1553.00px;top:1009.05px;font-size:14px;color:#4a4a4c;font-weight:bold;transform:scaleX(1.0404);">History</div>
<div class="r" style="left:1882.3px;top:52px;width:1.7px;height:988px;background:#9a9a9a;"></div>
<div class="r" style="left:0px;top:52px;width:1.3px;height:988px;background:#8a8a8a;"></div>
<div class="r" style="left:0;top:147.5px;width:1884px;height:8px;background:linear-gradient(rgba(0,0,0,0.21),rgba(0,0,0,0.06) 55%,rgba(0,0,0,0))"></div>
</body></html>
